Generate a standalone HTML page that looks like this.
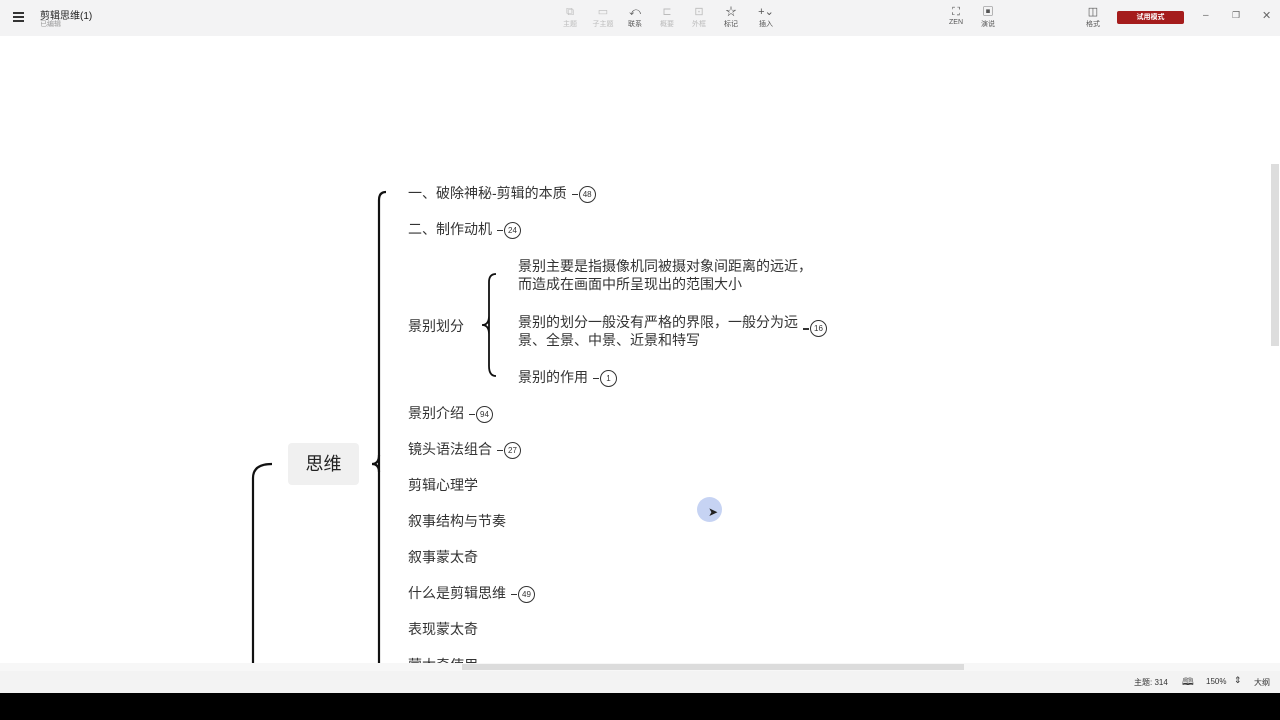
<!DOCTYPE html>
<html><head><meta charset="utf-8"><style>
*{margin:0;padding:0;box-sizing:border-box}
body{width:1280px;height:720px;overflow:hidden;background:#fff;font-family:"Liberation Sans","Noto Sans CJK SC",sans-serif;position:relative;color:#333}
.a{position:absolute;white-space:nowrap}
.top{position:absolute;left:0;top:0;width:1280px;height:36px;background:#f3f3f4}
.tb{position:absolute;top:5px;width:30px;text-align:center;font-size:7px;color:#555}
.tb.d{color:#bbb}
.tb i{display:block;font-style:normal;font-size:11px;height:14px;line-height:14px}
.t{position:absolute;font-size:14px;color:#333;line-height:18px;white-space:nowrap}
.b{display:inline-block;width:17px;height:17px;border:1px solid #333;border-radius:50%;font-size:8px;text-align:center;line-height:15px;vertical-align:middle;margin-left:12px;position:relative;color:#333}
.b:before{content:"";position:absolute;left:-8px;top:7px;width:6px;height:1.5px;background:#333}
</style></head><body>
<div class="top"></div>
<div class="a" style="left:13px;top:12px;width:11px;height:1.5px;background:#333;box-shadow:0 4px 0 #333,0 8px 0 #333"></div>
<div class="a" style="left:40px;top:7px;font-size:10px;color:#222">剪辑思维(1)</div>
<div class="a" style="left:40px;top:19px;font-size:7px;color:#999">已编辑</div>
<div class="tb d" style="left:555px"><i>⧉</i>主题</div>
<div class="tb d" style="left:588px"><i>▭</i>子主题</div>
<div class="tb" style="left:620px"><i>⤺</i>联系</div>
<div class="tb d" style="left:652px"><i>⊏</i>概要</div>
<div class="tb d" style="left:684px"><i>⊡</i>外框</div>
<div class="tb" style="left:716px"><i>☆</i>标记</div>
<div class="tb" style="left:751px"><i>+⌄</i>插入</div>
<div class="tb" style="left:941px"><i>⛶</i>ZEN</div>
<div class="tb" style="left:973px"><i>▣</i>演说</div>
<div class="tb" style="left:1078px"><i>◫</i>格式</div>
<div class="a" style="left:1117px;top:11px;width:67px;height:13px;background:#a51c1c;border-radius:2px;color:#fff;font-size:7px;text-align:center;line-height:13px;font-weight:bold">试用模式</div>
<div class="a" style="left:1203px;top:10px;font-size:10px;color:#666">–</div>
<div class="a" style="left:1232px;top:10px;font-size:9px;color:#666">❐</div>
<div class="a" style="left:1262px;top:9px;font-size:11px;color:#666">✕</div>

<svg class="a" style="left:0;top:0" width="1280" height="672">
<g fill="none" stroke="#111" stroke-width="2.2">
<path d="M379 664 V200 Q379 192 386 192"/>
<path d="M379 455 Q379 464 372 464 Q379 464 379 472"/>
<path d="M253 664 V478 Q253 464 272 464"/>
<path d="M489 366 V282 Q489 274 496 274 M489 316 Q489 325 482 325 Q489 325 489 334 M489 366 Q489 376 496 376" stroke-width="1.8"/>
</g></svg>

<div class="a" style="left:288px;top:443px;width:71px;height:42px;background:#f0f0f0;border-radius:4px;font-size:18px;text-align:center;line-height:42px;color:#222">思维</div>

<div class="t" style="left:408px;top:184px">一、破除神秘-剪辑的本质<span class="b">48</span></div>
<div class="t" style="left:408px;top:220px">二、制作动机<span class="b">24</span></div>
<div class="t" style="left:408px;top:317px">景别划分</div>
<div class="t" style="left:518px;top:257px">景别主要是指摄像机同被摄对象间距离的远近，<br>而造成在画面中所呈现出的范围大小</div>
<div class="t" style="left:518px;top:313px">景别的划分一般没有严格的界限，一般分为远<br>景、全景、中景、近景和特写</div>
<div class="a" style="left:798px;top:320px"><span class="b">16</span></div>
<div class="t" style="left:518px;top:368px">景别的作用<span class="b">1</span></div>
<div class="t" style="left:408px;top:404px">景别介绍<span class="b">94</span></div>
<div class="t" style="left:408px;top:440px">镜头语法组合<span class="b">27</span></div>
<div class="t" style="left:408px;top:476px">剪辑心理学</div>
<div class="t" style="left:408px;top:512px">叙事结构与节奏</div>
<div class="t" style="left:408px;top:548px">叙事蒙太奇</div>
<div class="t" style="left:408px;top:584px">什么是剪辑思维<span class="b">49</span></div>
<div class="t" style="left:408px;top:620px">表现蒙太奇</div>
<div class="t" style="left:408px;top:656px">蒙太奇使用</div>

<div class="a" style="left:697px;top:497px;width:25px;height:25px;border-radius:50%;background:#b8c8f0;opacity:.8"></div>
<div class="a" style="left:708px;top:505px;font-size:12px;color:#222">➤</div>

<div class="a" style="left:1271px;top:164px;width:8px;height:182px;background:#ddd"></div>
<div class="a" style="left:0;top:663px;width:1280px;height:8px;background:#f7f7f7"></div>
<div class="a" style="left:462px;top:664px;width:502px;height:6px;background:#dcdcdc"></div>
<div class="a" style="left:0;top:671px;width:1280px;height:22px;background:#f3f3f3"></div>
<div class="a" style="left:1134px;top:677px;font-size:8px;color:#333">主题: 314</div>
<div class="a" style="left:1182px;top:675px;font-size:10px;color:#333">🕮</div>
<div class="a" style="left:1206px;top:677px;font-size:8px;color:#333">150%</div>
<div class="a" style="left:1234px;top:675px;font-size:9px;color:#333">⇕</div>
<div class="a" style="left:1254px;top:677px;font-size:8px;color:#333">大纲</div>
<div class="a" style="left:0;top:693px;width:1280px;height:27px;background:#000"></div>
</body></html>
